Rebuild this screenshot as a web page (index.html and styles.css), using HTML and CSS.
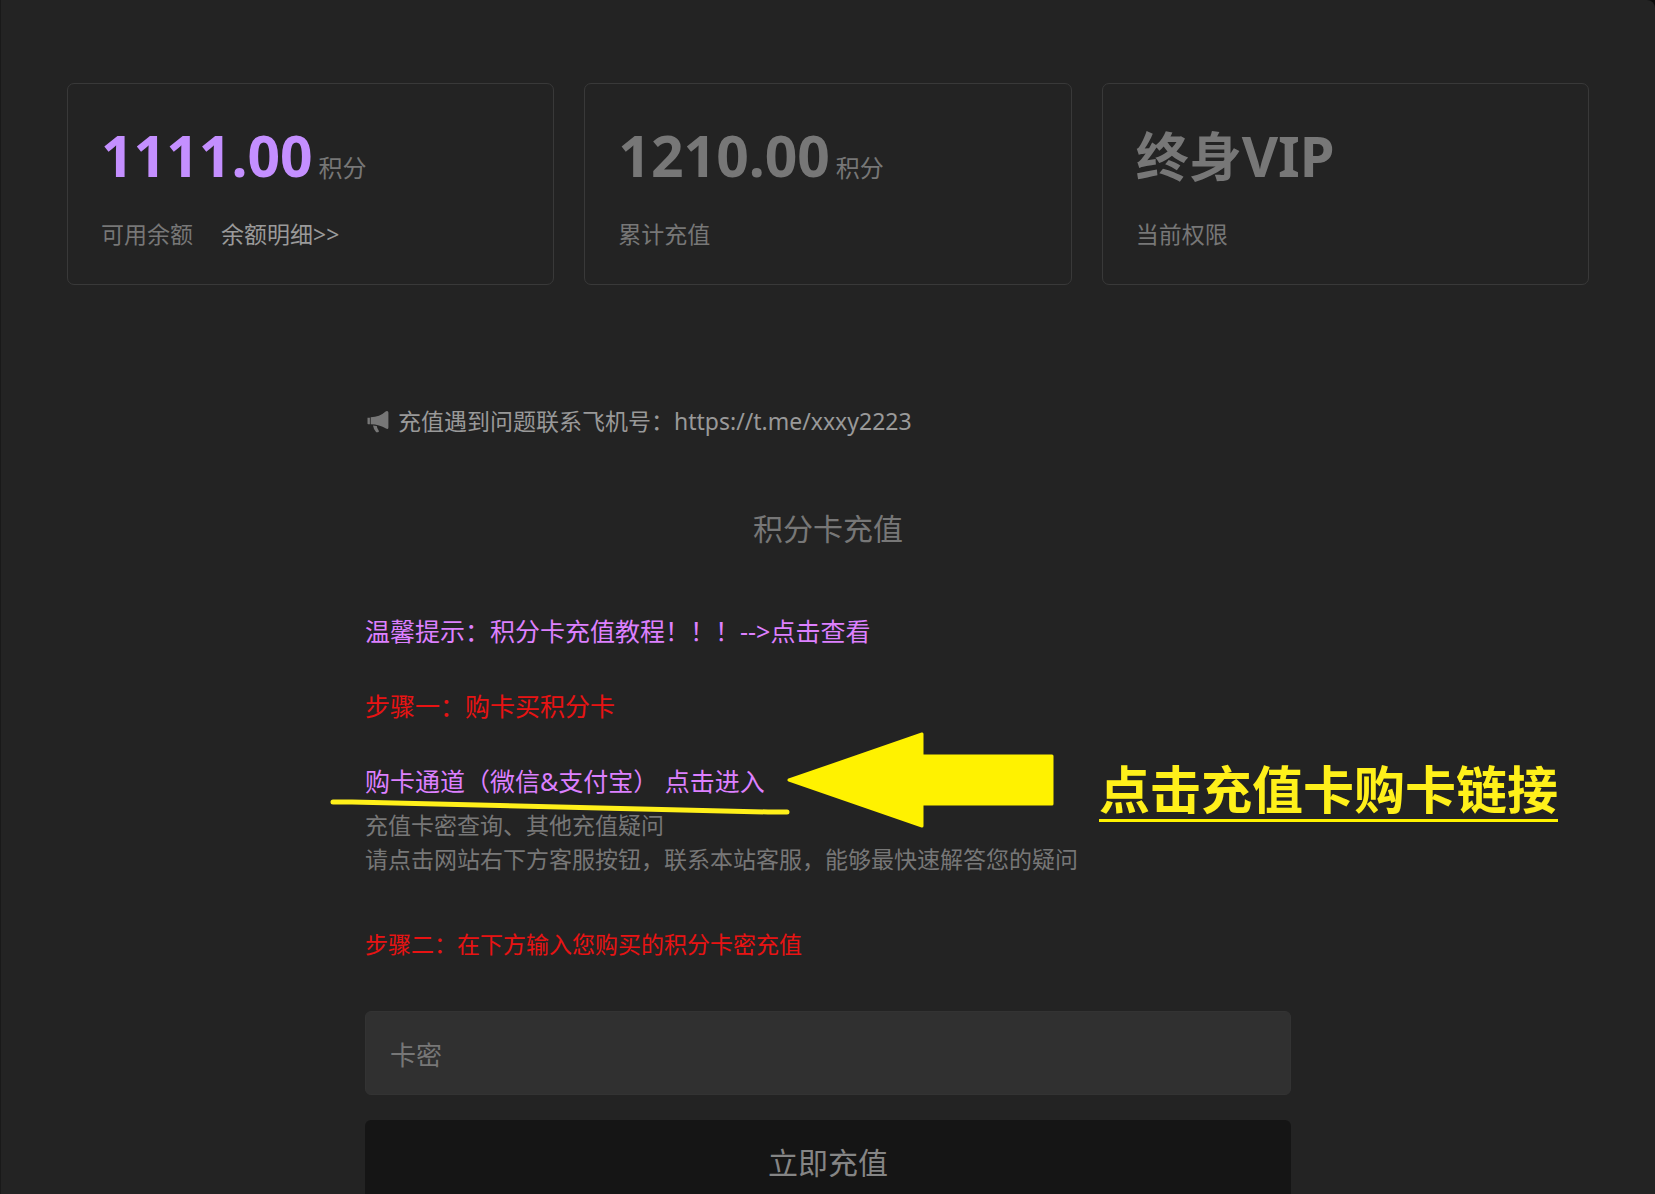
FILE: index.html
```html
<!DOCTYPE html>
<html lang="zh-CN">
<head>
<meta charset="utf-8">
<meta name="viewport" content="width=device-width, initial-scale=1">
<title>积分卡充值</title>
<link rel="stylesheet" href="styles.css">
</head>
<body>
<main class="panel">
  <section class="stats">
    <article class="card">
      <p class="value value-accent"><strong class="amount">1111.00</strong> <span class="unit">积分</span></p>
      <p class="caption">可用余额 <a class="detail" href="#detail">余额明细&gt;&gt;</a></p>
    </article>
    <article class="card">
      <p class="value"><strong class="amount">1210.00</strong> <span class="unit">积分</span></p>
      <p class="caption">累计充值</p>
    </article>
    <article class="card">
      <p class="value"><strong>终身<span class="rank">VIP</span></strong></p>
      <p class="caption">当前权限</p>
    </article>
  </section>

  <section class="recharge">
    <p class="notice">
      <svg class="horn" viewBox="0 0 24 24" aria-hidden="true">
        <path d="M2 8.800h2.400v6.400H2.800Q2 15.200 2 14.400zM5.200 8.300Q14 8 20.500 2.200Q22.700 1.200 22.900 3.500V18.500Q22.700 20.800 20.500 19.600Q14 15.500 5.200 15.300zM7.500 16.400l3.800.6q.2 2.600 2 4.800q.5 1.200-.8 1.400H10.700Q8.100 20.500 7.500 16.400z"/>
      </svg>
      <span>充值遇到问题联系飞机号：https://t.me/xxxy2223</span>
    </p>
    <h1 class="title">积分卡充值</h1>
    <p class="step"><a class="link" href="#guide">温馨提示：积分卡充值教程！！！--&gt;点击查看</a></p>
    <p class="step warn">步骤一：购卡买积分卡</p>
    <div class="step channel">
      <a class="link" href="#shop">购卡通道（微信&amp;支付宝） 点击进入</a>
      <svg class="stroke" viewBox="0 0 460 16" aria-hidden="true">
        <path d="M3 3H22L438 13H457"/>
      </svg>
      <svg class="arrow" viewBox="0 0 268 96" aria-hidden="true">
        <path d="M2 48L135 2V24H265V72H135V94Z"/>
      </svg>
      <strong class="callout">点击充值卡购卡链接</strong>
    </div>
    <p class="help">充值卡密查询、其他充值疑问<br>请点击网站右下方客服按钮，联系本站客服，能够最快速解答您的疑问</p>
    <form class="form">
      <label class="warn" for="code">步骤二：在下方输入您购买的积分卡密充值</label>
      <input class="field" id="code" type="text" placeholder="卡密">
      <button class="submit" type="submit">立即充值</button>
    </form>
  </section>
</main>
</body>
</html>
```
FILE: styles.css
```css
* {
  box-sizing: border-box;
}

html {
  background: #0c0c0c;
  scrollbar-width: none;
}

body {
  margin: 0;
  color: #777;
  font: 23px/34px "Noto Sans", "Noto Sans CJK SC", sans-serif;
}

p,
h1 {
  margin: 0;
}

a {
  text-decoration: none;
}

.panel {
  min-height: 100vh;
  padding: 83px 66px 0;
  border-left: 1px solid #191919;
  border-top-right-radius: 8px;
  background: #232323;
}

.stats {
  display: grid;
  grid-template-columns: repeat(3, 1fr);
  gap: 30px;
}

.card {
  padding: 40px 33px 33px;
  border: 1px solid #393939;
  border-radius: 7px;
}

.value {
  font-size: 53px;
  line-height: 66px;
  white-space: nowrap;
}

.amount {
  font-size: 57px;
  line-height: 50px;
}

.rank {
  font-size: 56px;
  line-height: 50px;
}

.value-accent .amount {
  color: #c48fff;
}

.unit {
  margin-left: -8px;
  font-size: 24px;
  line-height: 24px;
}

.caption {
  margin-top: 27px;
}

.detail {
  margin-left: 22px;
  color: #9a9a9a;
}

.recharge {
  max-width: 926px;
  margin: 119px auto 0;
}

.notice {
  display: flex;
  align-items: center;
  gap: 8px;
  color: #999;
}

.horn {
  width: 25px;
  height: 24px;
  fill: #777;
}

.title {
  margin: 69px 0 62px;
  font-size: 30px;
  font-weight: 400;
  line-height: 44px;
  text-align: center;
}

.step {
  margin-bottom: 39px;
  font-size: 25px;
  line-height: 36px;
}

.link {
  color: #dd80ff;
}

.warn {
  color: #e81313;
}

.channel {
  position: relative;
  margin-bottom: 9px;
}

.stroke {
  position: absolute;
  top: 36px;
  left: -35px;
  width: 460px;
  fill: none;
  stroke: #fff01a;
  stroke-width: 5px;
  stroke-linecap: round;
  stroke-linejoin: round;
}

.arrow {
  position: absolute;
  top: -31px;
  left: 422px;
  width: 268px;
  fill: #fff200;
  stroke: #fff200;
  stroke-width: 3px;
  stroke-linejoin: round;
}

.callout {
  position: absolute;
  top: -4px;
  left: 734px;
  border-bottom: 3px solid #fff200;
  color: #fff01a;
  font-size: 51px;
  line-height: 60px;
  white-space: nowrap;
}

.form {
  display: flex;
  flex-direction: column;
  margin-top: 51px;
}

.field {
  height: 84px;
  margin: 50px 0 25px;
  padding: 4px 24px 0;
  border: 1px solid #333;
  border-radius: 6px;
  background: #303030;
  color: #999;
  font: inherit;
  font-size: 26px;
}

.field::placeholder {
  color: #777;
  opacity: 1;
}

.submit {
  height: 86px;
  border: 0;
  border-radius: 6px;
  background: #151515;
  color: #858585;
  font: inherit;
  font-size: 30px;
}
```
